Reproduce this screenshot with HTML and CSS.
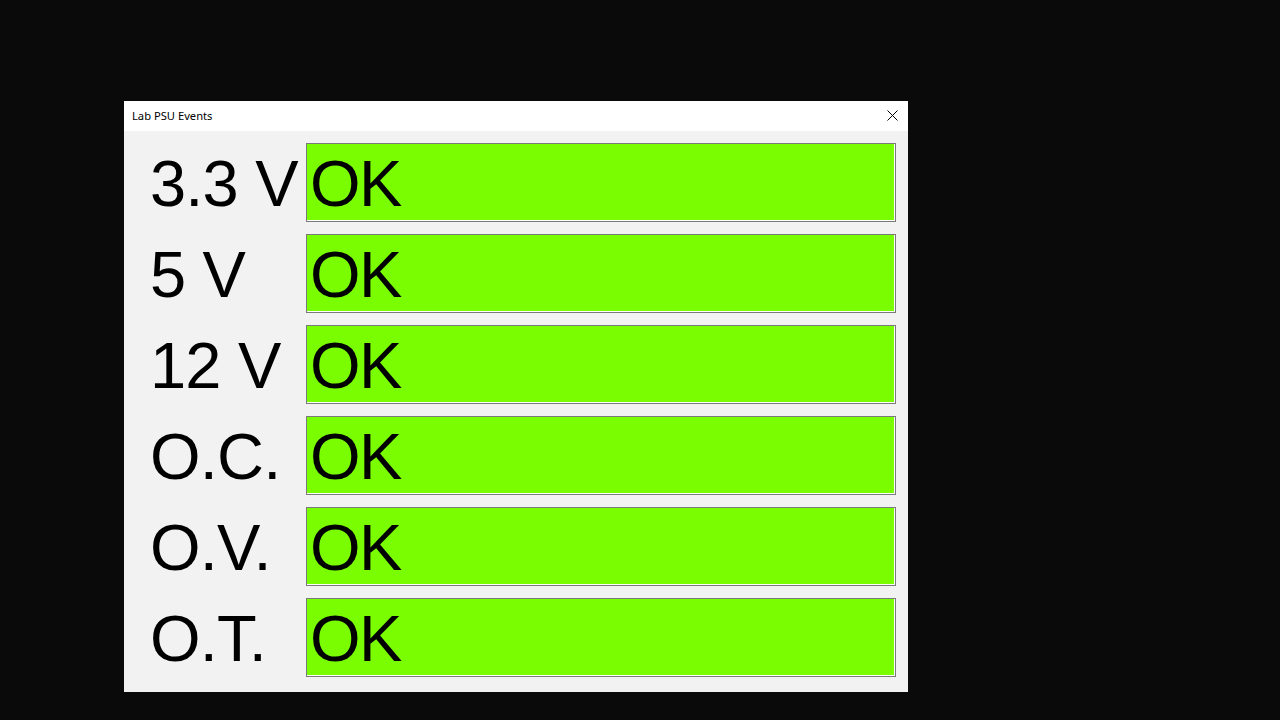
FILE: index.html
```html
<!DOCTYPE html>
<html>
<head>
<meta charset="utf-8">
<link rel="stylesheet" href="styles.css">
</head>
<body>
<div class="window">
  <div class="titlebar">
    <span class="title">Lab PSU Events</span>
    <span class="close">
      <svg width="11" height="11" viewBox="0 0 11 11"><path d="M0.5 0.5 L10.5 10.5 M10.5 0.5 L0.5 10.5" stroke="#000" stroke-width="1" fill="none"/></svg>
    </span>
  </div>
  <div class="content">
    <div class="row"><div class="label">3.3 V</div><div class="status">OK</div></div>
    <div class="row"><div class="label">5 V</div><div class="status">OK</div></div>
    <div class="row"><div class="label">12 V</div><div class="status">OK</div></div>
    <div class="row"><div class="label">O.C.</div><div class="status">OK</div></div>
    <div class="row"><div class="label">O.V.</div><div class="status">OK</div></div>
    <div class="row"><div class="label">O.T.</div><div class="status">OK</div></div>
  </div>
</div>
</body>
</html>
```
FILE: styles.css
```css
html, body {
  margin: 0;
  padding: 0;
  background: #0a0a0a;
  width: 1280px;
  height: 720px;
  overflow: hidden;
}
body {
  padding: 101px 0 0 124px;
  box-sizing: border-box;
}
.window {
  width: 784px;
  height: 591px;
  display: flex;
  flex-direction: column;
  background: #f2f2f2;
}
.titlebar {
  height: 30px;
  background: #ffffff;
  display: flex;
  align-items: center;
  justify-content: space-between;
  padding: 0 10px 0 8px;
  font-family: "Noto Sans", "Liberation Sans", sans-serif;
  font-size: 11.2px;
  color: #000;
}
.title {
  margin-top: -1px;
}
.close {
  display: flex;
  width: 11px;
  height: 11px;
  margin-top: -1px;
}
.content {
  flex: 1;
  display: flex;
  flex-direction: column;
  gap: 12px;
  padding: 12px 12px 15px 0;
}
.row {
  display: flex;
  height: 79px;
}
.label {
  width: 182px;
  flex-shrink: 0;
  padding-left: 26px;
  display: flex;
  align-items: center;
  font-family: "Liberation Sans", Arial, sans-serif;
  font-size: 65px;
  letter-spacing: -0.8px;
  color: #000;
  white-space: nowrap;
  line-height: 1;
  padding-top: 1px;
  box-sizing: border-box;
  overflow: hidden;
}
.status {
  flex: 1;
  box-sizing: border-box;
  border: 1px solid #7a7a7a;
  background: #79fd00;
  box-shadow: inset -1px -1px 0 #ffffff;
  display: flex;
  align-items: center;
  padding-left: 3px;
  padding-top: 1px;
  font-family: "Liberation Sans", Arial, sans-serif;
  font-size: 65px;
  letter-spacing: -1.5px;
  line-height: 1;
  color: #000;
}
```
